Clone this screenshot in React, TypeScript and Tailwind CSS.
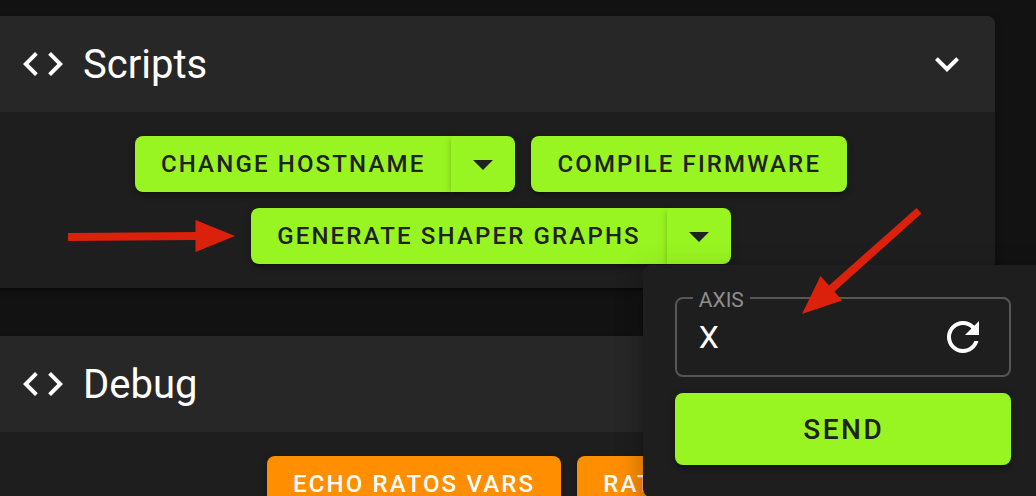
import type { ReactNode } from 'react';

const ICONS = {
  code: 'M14.6,16.6L19.2,12L14.6,7.4L16,6L22,12L16,18L14.6,16.6M9.4,16.6L4.8,12L9.4,7.4L8,6L2,12L8,18L9.4,16.6Z',
  chevron: 'M7.41,8.58L12,13.17L16.59,8.58L18,10L12,16L6,10L7.41,8.58Z',
  menuDown: 'M7,10L12,15L17,10H7Z',
  refresh:
    'M17.65,6.35C16.2,4.9 14.21,4 12,4A8,8 0 0,0 4,12A8,8 0 0,0 12,20C15.73,20 18.84,17.45 19.73,14H17.65C16.83,16.33 14.61,18 12,18A6,6 0 0,1 6,12A6,6 0 0,1 12,6C13.66,6 15.14,6.69 16.22,7.78L13,11H20V4L17.65,6.35Z',
};

const RAISED =
  'shadow-[0_6px_2px_-4px_rgba(0,0,0,0.2),0_4px_4px_0_rgba(0,0,0,0.14),0_2px_10px_0_rgba(0,0,0,0.12)]';
const BUTTON = `h-14 px-[26px] text-2xl font-medium uppercase tracking-[0.09em] whitespace-nowrap ${RAISED}`;
const GREEN = 'bg-[#99f521] text-[#212121]';
const ORANGE = 'bg-[#ff8e00] text-white';

function Icon({ path }: { path: string }) {
  return (
    <svg viewBox="0 0 24 24" className="size-12 shrink-0 fill-current" aria-hidden="true">
      <path d={path} />
    </svg>
  );
}

function Panel({ title, children }: { title: string; children: ReactNode }) {
  return (
    <section className={`rounded-lg bg-[#1e1e1e] ${RAISED}`}>
      <header className="flex h-24 items-center gap-4 rounded-t-lg bg-[#272727] pr-6 pl-8">
        <Icon path={ICONS.code} />
        <h2 className="grow pt-0.5 text-[40px] leading-none">{title}</h2>
        <button type="button" aria-label={`Collapse ${title}`}>
          <Icon path={ICONS.chevron} />
        </button>
      </header>
      <div className="flex flex-wrap justify-center gap-4 p-6">{children}</div>
    </section>
  );
}

function SplitButton({ label, children }: { label: string; children?: ReactNode }) {
  return (
    <div className="relative flex">
      <button type="button" className={`${BUTTON} ${GREEN} rounded-l-lg`}>
        {label}
      </button>
      <button
        type="button"
        aria-label={`${label} options`}
        className={`flex h-14 w-16 items-center justify-center rounded-r-lg ${RAISED} ${GREEN}`}
      >
        <Icon path={ICONS.menuDown} />
      </button>
      {children}
    </div>
  );
}

function ParameterMenu() {
  return (
    <div className="absolute top-full left-full z-10 mt-px -ml-[88px] w-[400px] rounded-lg bg-[#1e1e1e] p-8 shadow-[0_10px_10px_-6px_rgba(0,0,0,0.2),0_16px_20px_2px_rgba(0,0,0,0.14),0_6px_28px_4px_rgba(0,0,0,0.12)]">
      <div className="relative flex h-20 items-center rounded-lg border-2 border-[#565656] px-[22px]">
        <label
          htmlFor="axis"
          className="absolute -top-[11px] left-4 bg-[#1e1e1e] px-1.5 text-[21px] leading-6 text-[#8e8e8e]"
        >
          AXIS
        </label>
        <input
          id="axis"
          type="text"
          defaultValue="X"
          className="h-12 min-w-0 grow bg-transparent text-[32px] outline-none"
        />
        <button type="button" aria-label="Reset axis">
          <Icon path={ICONS.refresh} />
        </button>
      </div>
      <button
        type="button"
        className={`mt-4 h-[72px] w-full rounded-lg pt-0.5 pl-0.5 text-[28px] font-medium tracking-[0.09em] uppercase ${RAISED} ${GREEN}`}
      >
        Send
      </button>
      <svg
        viewBox="0 0 120 108"
        className="pointer-events-none absolute -top-[58px] left-[159px] h-[108px] w-[120px] fill-[#db200c]"
        aria-hidden="true"
      >
        <path d="M114.500 1 L119.500 6.500 L32.500 84.500 L40 93.500 L0 107 L18.500 69 L27 78.500 Z" />
      </svg>
    </div>
  );
}

export default function App() {
  return (
    <main className="h-screen overflow-hidden bg-[#121212] pt-4 text-white [font-family:Roboto,sans-serif]">
      <div className="mr-[41px] -ml-[13px] flex flex-col gap-12">
        <Panel title="Scripts">
          <SplitButton label="Change hostname" />
          <button type="button" className={`${BUTTON} ${GREEN} rounded-lg`}>
            Compile firmware
          </button>
          <SplitButton label="Generate shaper graphs">
            <svg
              viewBox="0 0 167 32"
              className="pointer-events-none absolute top-3 right-full mr-4 h-8 w-[167px] fill-[#db200c]"
              aria-hidden="true"
            >
              <path d="M0 13 L127.500 12 V0 L167 16 L127.500 32 V20 L0 21 Z" />
            </svg>
            <ParameterMenu />
          </SplitButton>
        </Panel>
        <Panel title="Debug">
          <button type="button" className={`${BUTTON} ${ORANGE} rounded-lg`}>
            Echo RatOS vars
          </button>
          <button type="button" className={`${BUTTON} ${ORANGE} rounded-lg`}>
            RatOS
          </button>
        </Panel>
      </div>
    </main>
  );
}
